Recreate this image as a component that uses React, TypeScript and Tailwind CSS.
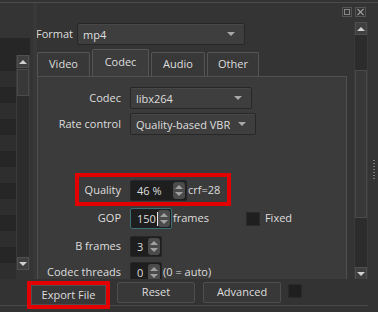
import React from "react";

const FONT = "font-['Open_Sans',sans-serif] text-[11px] text-[#dedede] whitespace-nowrap";

function Arrow({ up = false, className = "" }: { up?: boolean; className?: string }) {
  return (
    <svg width="8" height="4" viewBox="0 0 8 4" className={className} aria-hidden="true">
      <path d={up ? "M0 4 L4 0 L8 4 Z" : "M0 0 L8 0 L4 4 Z"} fill="currentColor" />
    </svg>
  );
}

function Combo({ value, width }: { value: string; width: string }) {
  return (
    <div
      className={`${width} h-[22px] flex items-center justify-between pl-[5px] pr-[9px] rounded-[2px] bg-[#3e3e3e] border border-[#272727] shadow-[inset_0_1px_0_#474747]`}
    >
      <span className="leading-none">{value}</span>
      <Arrow className="text-[#a8a8a8]" />
    </div>
  );
}

function Spin({
  value,
  width,
  focus = false,
  cursor = false,
}: {
  value: string;
  width: string;
  focus?: boolean;
  cursor?: boolean;
}) {
  return (
    <div
      className={`${width} h-[21px] flex items-center justify-between pl-[6px] pr-[1px] rounded-[2px] bg-[#1e1e1e] border ${
        focus ? "border-[#3d6f74]" : "border-[#262626]"
      }`}
    >
      <span className="leading-none flex items-center">
        {value}
        {cursor && <span className="inline-block w-px h-[14px] bg-[#e8e8e8] ml-px" />}
      </span>
      <div className="w-[12px] h-[17px] rounded-[3px] bg-[#4b4b4b] flex flex-col items-center justify-center gap-[3px] text-[#a0a0a0]">
        <Arrow up />
        <Arrow />
      </div>
    </div>
  );
}

function Row({ label, mt, children }: { label: string; mt: string; children: React.ReactNode }) {
  return (
    <div className={`flex items-center ${mt}`}>
      <div className="w-[84px] text-right pr-px">{label}</div>
      <div className="ml-[8px] flex items-center">{children}</div>
    </div>
  );
}

function Tab({ label, width, selected = false }: { label: string; width: string; selected?: boolean }) {
  return (
    <div
      className={`${width} flex items-center justify-center rounded-t-[2px] border border-b-0 border-[#555] ${
        selected ? "h-[27px] bg-[#3c3c3c] pb-[2px]" : "h-[24px] bg-[#383838]"
      }`}
    >
      {label}
    </div>
  );
}

function Button({ label }: { label: string }) {
  return (
    <div className="w-[78px] h-[21px] flex items-center justify-center rounded-[2px] bg-[#383838] border border-[#4e4e4e]">
      {label}
    </div>
  );
}

function ScrollArrow({ up = false }: { up?: boolean }) {
  return (
    <div className="h-[13px] bg-[#3f3f3f] border border-[#4f4f4f] flex items-center justify-center text-[#d0d0d0]">
      <Arrow up={up} />
    </div>
  );
}

export default function App() {
  return (
    <div className={`relative w-[378px] h-[312px] overflow-hidden bg-[#343434] flex flex-col ${FONT}`}>
      <div className="h-[2px] bg-[#333]" />
      <div className="h-px bg-[#4c4c4c]" />

      {/* dock title buttons */}
      <div className="absolute top-[7px] left-[342px] flex gap-[3px]">
        <svg width="10" height="10" viewBox="0 0 10 10" aria-hidden="true">
          <rect x="0.5" y="0.5" width="9" height="9" fill="none" stroke="#777" strokeDasharray="1 1" />
          <rect x="2.5" y="2.5" width="5" height="5" fill="none" stroke="#888" />
        </svg>
        <svg width="11" height="10" viewBox="0 0 11 10" aria-hidden="true">
          <rect x="0.5" y="0.5" width="10" height="9" fill="none" stroke="#777" strokeDasharray="1 1" />
          <path d="M2.5 2 L8.5 8 M8.5 2 L2.5 8" stroke="#999" strokeWidth="1.2" />
        </svg>
      </div>

      <div className="h-[276px] flex">
        {/* left list */}
        <div className="w-[30px] pt-[35px] flex flex-col">
          <div className="h-[25px] bg-[#262626]" />
          <div className="flex">
            <div className="w-[16px] flex flex-col">
              {Array.from({ length: 14 }).map((_, i) => (
                <div key={i} className={`h-[16px] ${i % 2 === 0 ? "bg-[#262626]" : "bg-[#2e2e2e]"}`} />
              ))}
            </div>
            <div className="w-[14px] h-[215px] flex flex-col bg-[#2c2c2c] border-x border-[#3a3a3a]">
              <ScrollArrow up />
              <div className="h-[27px] mt-px bg-[#383838] border border-[#4a4a4a]" />
              <div className="flex-1" />
              <ScrollArrow />
            </div>
          </div>
        </div>
        <div className="w-[7px] flex">
          <div className="w-[3px]" />
          <div className="w-[4px] bg-[#383838]" />
        </div>

        {/* main */}
        <div className="w-[310px] pt-[20px] overflow-hidden flex flex-col">
          <div className="flex items-center">
            <span className="-ml-px">Format</span>
            <div className="ml-[4px]">
              <Combo value="mp4" width="w-[168px]" />
            </div>
          </div>

          <div className="mt-[4px] flex items-end gap-[2px]">
            <Tab label="Video" width="w-[53px]" />
            <Tab label="Codec" width="w-[57px]" selected />
            <Tab label="Audio" width="w-[54px]" />
            <Tab label="Other" width="w-[52px]" />
          </div>

          <div className="h-[260px] bg-[#3b3b3b] border border-[#505050] pt-[10px]">
            <Row label="Codec" mt="mt-0">
              <Combo value="libx264" width="w-[122px]" />
            </Row>
            <Row label="Rate control" mt="mt-[4px]">
              <Combo value="Quality-based VBR" width="w-[126px]" />
            </Row>

            <div className="relative mt-[45px]">
              <Row label="Quality" mt="mt-0">
                <Spin value="46 %" width="w-[57px]" />
                <span className="ml-[1px]">crf=28</span>
              </Row>
              <div className="absolute left-[37px] top-[-7px] w-[156px] h-[33px] border-[4px] border-[#e30000]" />
            </div>

            <Row label="GOP" mt="mt-[7px]">
              <Spin value="150" width="w-[42px]" focus cursor />
              <span className="ml-px">frames</span>
              <div className="ml-[37px] w-[14px] h-[14px] bg-[#1f1f1f] border border-[#2a2a2a]" />
              <span className="ml-[5px]">Fixed</span>
            </Row>
            <Row label="B frames" mt="mt-[7px]">
              <Spin value="3" width="w-[32px]" />
            </Row>
            <Row label="Codec threads" mt="mt-[5px]">
              <Spin value="0" width="w-[32px]" />
              <span className="ml-px">(0 = auto)</span>
            </Row>
          </div>
        </div>

        {/* right scrollbar + splitter */}
        <div className="w-[31px] flex">
          <div className="ml-[7px] mt-[19px] w-[14px] h-[258px] flex flex-col bg-[#2c2c2c] border-x border-[#3a3a3a]">
            <ScrollArrow up />
            <div className="mt-[35px] h-[148px] bg-[#383838] border border-[#4a4a4a]" />
            <div className="flex-1" />
            <ScrollArrow />
          </div>
          <div className="ml-[5px] mt-[157px] flex flex-col gap-[2px]">
            {Array.from({ length: 7 }).map((_, i) => (
              <div key={i} className="w-[2px] h-[1px] bg-[#777]" />
            ))}
          </div>
        </div>
      </div>

      {/* bottom buttons */}
      <div className="relative flex-1 bg-[#333]">
        <div className="absolute left-0 top-[26px] w-[368px] h-px bg-[#474747]" />
        <div className="relative flex items-start pl-[27px] pt-[2px]">
          <div className="border-[4px] border-[#e30000]">
            <div className="w-[75px] h-[20px] flex items-center justify-center bg-[#383838] border border-[#4e4e4e]">
              Export File
            </div>
          </div>
          <div className="ml-[7px] mt-[1px]">
            <Button label="Reset" />
          </div>
          <div className="ml-[8px] mt-[1px]">
            <Button label="Advanced" />
          </div>
          <div className="ml-[7px] mt-[3px] w-[14px] h-[14px] bg-[#1f1f1f] border border-[#2a2a2a]" />
        </div>
      </div>
    </div>
  );
}
